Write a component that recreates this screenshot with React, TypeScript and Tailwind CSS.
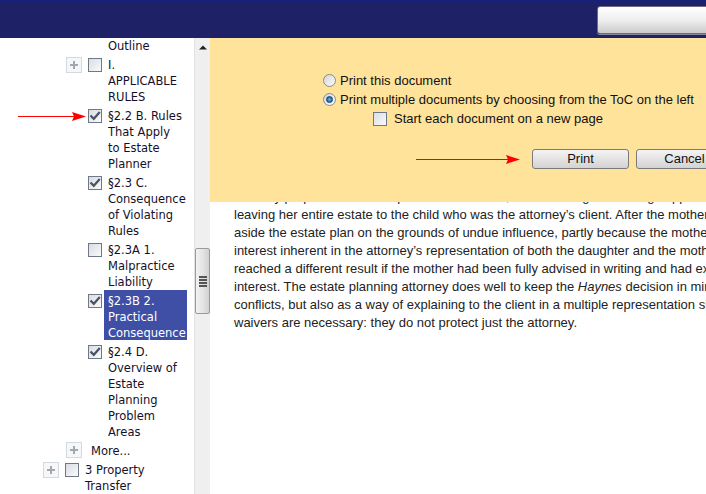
import React from 'react';

const treeFont = { fontFamily: '"DejaVu Sans", Verdana, sans-serif' };
const bodyFont = { fontFamily: '"Liberation Sans", Arial, sans-serif' };

function CheckBox({ checked }: { checked?: boolean }) {
  return (
    <span className="flex h-[14px] w-[14px] shrink-0 items-center justify-center border border-[#6f7888] bg-linear-to-br from-[#d9dde2] to-[#f9fafb]">
      {checked && (
        <svg width="12" height="12" viewBox="0 0 12 12">
          <path d="M1.5 5.5 L4.8 8.8 L10.8 2" fill="none" stroke="#4b5263" strokeWidth="2.2" />
        </svg>
      )}
    </span>
  );
}

function PlusBox() {
  return (
    <span className="flex h-[16px] w-[16px] shrink-0 items-center justify-center border border-[#d3d9e0] bg-[#f5f7f9]">
      <svg width="10" height="10" viewBox="0 0 10 10">
        <path d="M5 1 V9 M1 5 H9" stroke="#a3a8ae" strokeWidth="2" />
      </svg>
    </span>
  );
}

function RedArrow({ width }: { width: number }) {
  return (
    <svg width={width} height="12" viewBox={`0 0 ${width} 12`} className="shrink-0">
      <line x1="0" y1="6.5" x2={width - 10} y2="6.5" stroke="#ff0000" strokeWidth="1" />
      <path d={`M${width - 14} 2 L${width} 6.5 L${width - 14} 11 L${width - 12} 6.5 Z`} fill="#ff0000" />
    </svg>
  );
}

type Item = {
  lines: string[];
  checked?: boolean;
  plus?: boolean;
  arrow?: boolean;
  selected?: boolean;
};

function TreeItem({ item }: { item: Item }) {
  return (
    <div className="flex items-start">
      <div className="flex h-[16px] w-[88px] shrink-0 items-start">
        {item.plus && (
          <span className="ml-[66px] mt-[1px]">
            <PlusBox />
          </span>
        )}
        {item.arrow && (
          <span className="ml-[18px] mt-[3px]">
            <RedArrow width={68} />
          </span>
        )}
      </div>
      <span className="mt-[2px]">
        <CheckBox checked={item.checked} />
      </span>
      <div
        className={
          item.selected
            ? 'ml-[2px] -mt-[2px] w-[83px] overflow-hidden whitespace-nowrap bg-[#3f4fa6] pl-[4px] pt-[2px] text-white'
            : 'ml-[6px] w-[79px] overflow-hidden whitespace-nowrap'
        }
      >
        {item.lines.map((l) => (
          <div key={l} className="h-[16px] pt-[1px] leading-[16px]">
            {l}
          </div>
        ))}
      </div>
    </div>
  );
}

const items: Item[] = [
  { lines: ['I.', 'APPLICABLE', 'RULES'], plus: true },
  { lines: ['§2.2 B. Rules', 'That Apply', 'to Estate', 'Planner'], checked: true, arrow: true },
  { lines: ['§2.3 C.', 'Consequence', 'of Violating', 'Rules'], checked: true },
  { lines: ['§2.3A 1.', 'Malpractice', 'Liability'] },
  { lines: ['§2.3B 2.', 'Practical', 'Consequence'], checked: true, selected: true },
  { lines: ['§2.4 D.', 'Overview of', 'Estate', 'Planning', 'Problem', 'Areas'], checked: true },
];

function Radio({ checked }: { checked?: boolean }) {
  return (
    <span className="flex h-[13px] w-[13px] shrink-0 items-center justify-center rounded-full border border-[#8c8c8c] bg-linear-to-br from-[#d6d6d6] to-[#fbfbfb]">
      {checked && <span className="h-[7px] w-[7px] rounded-full bg-radial from-[#5ab8ee] to-[#0b4f86] border border-[#0d3f6a]" />}
    </span>
  );
}

function Button({ label }: { label: string }) {
  return (
    <button className="h-[20px] w-[97px] shrink-0 rounded-[3px] border border-[#7a7a7a] bg-linear-to-b from-[#f4f4f4] to-[#d3d3d3] text-[13px] leading-[18px] text-[#111]">
      {label}
    </button>
  );
}

const textLines = [
  'attorney prepared an estate plan for the mother, which among other things apparently disinherited her daughter by',
  'leaving her entire estate to the child who was the attorney’s client. After the mother died, the court set',
  'aside the estate plan on the grounds of undue influence, partly because the mother was not told of the conflict of',
  'interest inherent in the attorney’s representation of both the daughter and the mother. The court might have',
  'reached a different result if the mother had been fully advised in writing and had expressly waived the conflict of',
];

export default function App() {
  return (
    <div className="flex h-[494px] w-[706px] flex-col overflow-hidden bg-white">
      {/* top bar */}
      <div className="flex h-[38px] shrink-0 overflow-hidden border-t border-[#13207c] bg-[#1f2166] pl-[597px] pt-[5px]">
        <div className="h-[28px] w-[130px] shrink-0 rounded-[3px] border border-[#6a6a88] bg-linear-to-b from-white via-[#efefef] to-[#cbcbcb] shadow-[0_1px_0_#8888a0]" />
      </div>

      <div className="flex min-h-0 flex-1">
        {/* toc */}
        <div className="w-[194px] shrink-0 overflow-hidden text-[11.5px] text-[#14102a]" style={treeFont}>
          <div className="h-[16px] pl-[108px] leading-[16px]">Outline</div>
          <div className="mt-[2px] flex flex-col gap-[3px]">
            {items.map((it) => (
              <TreeItem key={it.lines[0]} item={it} />
            ))}
            <div className="flex items-start">
              <span className="ml-[66px]">
                <PlusBox />
              </span>
              <div className="ml-[9px] h-[16px] pt-[1px] leading-[16px]">More...</div>
            </div>
            <div className="flex items-start">
              <span className="ml-[43px] mt-[1px]">
                <PlusBox />
              </span>
              <span className="ml-[6px] mt-[2px]">
                <CheckBox />
              </span>
              <div className="ml-[6px] whitespace-nowrap">
                <div className="h-[16px] pt-[1px] leading-[16px]">3 Property</div>
                <div className="h-[16px] pt-[1px] leading-[16px]">Transfer</div>
              </div>
            </div>
          </div>
        </div>

        {/* scrollbar */}
        <div className="flex w-[16px] shrink-0 flex-col items-center border-l border-[#e2e2e2] bg-[#efefef]">
          <svg width="8" height="5" viewBox="0 0 8 5" className="mt-[7px]">
            <path d="M0 4.5 L4 0.5 L8 4.5 Z" fill="#222" />
          </svg>
          <div className="mt-[198px] flex h-[66px] w-[15px] items-center justify-center rounded-[2px] border border-[#9a9a9a] bg-linear-to-r from-[#f2f2f2] via-[#e4e4e4] to-[#d0d0d0]">
            <div className="flex flex-col gap-[1px]">
              <span className="h-[2px] w-[8px] bg-[#555]" />
              <span className="h-[2px] w-[8px] bg-[#555]" />
              <span className="h-[2px] w-[8px] bg-[#555]" />
              <span className="h-[2px] w-[8px] bg-[#555]" />
            </div>
          </div>
        </div>

        {/* document */}
        <div className="relative min-w-0 flex-1 overflow-hidden text-[13px] text-[#222]" style={bodyFont}>
          <div className="whitespace-nowrap pl-[24px] pt-[150px] leading-[18px]">
            {textLines.map((l) => (
              <div key={l}>{l}</div>
            ))}
            <div>
              interest. The estate planning attorney does well to keep the <i>Haynes</i> decision in mind, not only to avoid
            </div>
            <div>conflicts, but also as a way of explaining to the client in a multiple representation situation why these</div>
            <div>waivers are necessary: they do not protect just the attorney.</div>
          </div>

          {/* print panel */}
          <div className="absolute inset-x-0 top-0 h-[164px] bg-[#ffe39a] text-[#111]">
            <div className="pl-[113px] pt-[33px]">
              <div className="flex h-[19px] items-center gap-[4px]">
                <Radio />
                <span>Print this document</span>
              </div>
              <div className="flex h-[19px] items-center gap-[4px] whitespace-nowrap">
                <Radio checked />
                <span>Print multiple documents by choosing from the ToC on the left</span>
              </div>
              <div className="ml-[50px] flex h-[19px] items-center gap-[7px]">
                <CheckBox />
                <span>Start each document on a new page</span>
              </div>
            </div>
            <div className="mt-[21px] flex items-center pl-[206px]">
              <RedArrow width={104} />
              <span className="ml-[12px] flex gap-[7px]">
                <Button label="Print" />
                <Button label="Cancel" />
              </span>
            </div>
          </div>
        </div>
      </div>
    </div>
  );
}
